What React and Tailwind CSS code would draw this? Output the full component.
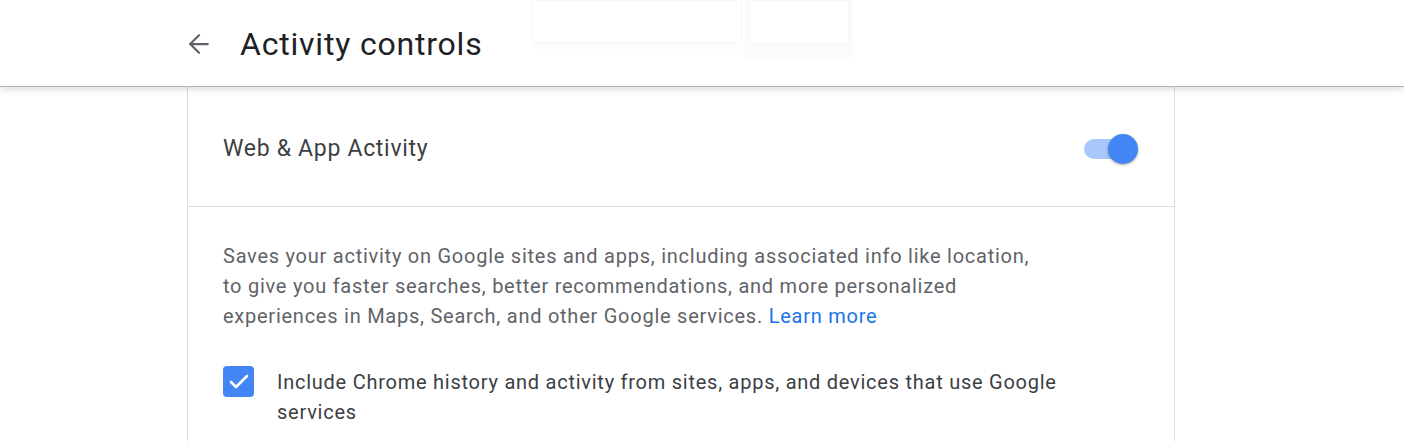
import { ArrowLeft, Check } from "lucide-react"

const font = { fontFamily: "Roboto, 'Noto Sans', sans-serif" }

function Toggle() {
  return (
    <div className="relative w-[58px] h-[32px] flex items-center">
      <div className="w-[46px] h-[20px] rounded-full bg-[#a8c7fa]" />
      <div className="absolute right-[4px] w-[30px] h-[30px] rounded-full bg-[#4285f4] shadow-[0_1px_3px_rgba(0,0,0,0.35)]" />
    </div>
  )
}

export default function App() {
  return (
    <div className="min-h-screen bg-white overflow-hidden" style={font}>
      <header className="relative z-10 h-[87px] bg-white border-b border-[#b5b5b5] shadow-[0_3px_6px_rgba(0,0,0,0.12)]">
        {/* faded thumbnails behind the header */}
        <div className="absolute left-[532px] top-0 w-[210px] h-[43px] rounded-b-md border border-[#f7f7f7] bg-white shadow-[0_6px_10px_rgba(0,0,0,0.015)]" />
        <div className="absolute left-[745px] top-0 w-[108px] h-[60px] rounded-b-md bg-[#fbfbfb]">
          <div className="mx-[4px] h-[44px] rounded-b-md border border-[#f7f7f7] bg-white" />
        </div>
        <div className="relative h-full flex items-center pl-[184px] pt-[2px]">
          <ArrowLeft size={30} strokeWidth={1.8} className="text-[#5f6368]" />
          <h1 className="ml-[26px] text-[32px] text-[#202124] font-normal tracking-[0.8px]">Activity controls</h1>
        </div>
      </header>

      <main className="pl-[187px] w-[1175px]">
        <div className="border-x border-[#dadce0]">
          <div className="h-[120px] border-b border-[#dadce0] flex items-center justify-between pl-[35px] pr-[32px] pt-[5px]">
            <span className="text-[23px] text-[#3c4043] tracking-[0.7px]">Web &amp; App Activity</span>
            <Toggle />
          </div>

          <div className="pl-[35px] pt-[34px] pb-[20px]">
            <p className="w-[818px] text-[20px] leading-[30px] text-[#5f6368] tracking-[0.75px]">
              Saves your activity on Google sites and apps, including associated info like location, to give you faster searches, better recommendations, and more personalized experiences in Maps, Search, and other Google services.{" "}
              <a className="text-[#1a73e8]">Learn more</a>
            </p>

            <div className="mt-[36px] flex items-start gap-[23px]">
              <div className="mt-[-1px] w-[31px] h-[31px] rounded-[4px] bg-[#4285f4] flex items-center justify-center shrink-0">
                <Check size={24} strokeWidth={2.6} className="text-white" />
              </div>
              <p className="w-[800px] text-[20px] leading-[30px] text-[#3c4043] tracking-[0.75px]">
                Include Chrome history and activity from sites, apps, and devices that use Google services
              </p>
            </div>
          </div>
        </div>
      </main>
    </div>
  )
}
